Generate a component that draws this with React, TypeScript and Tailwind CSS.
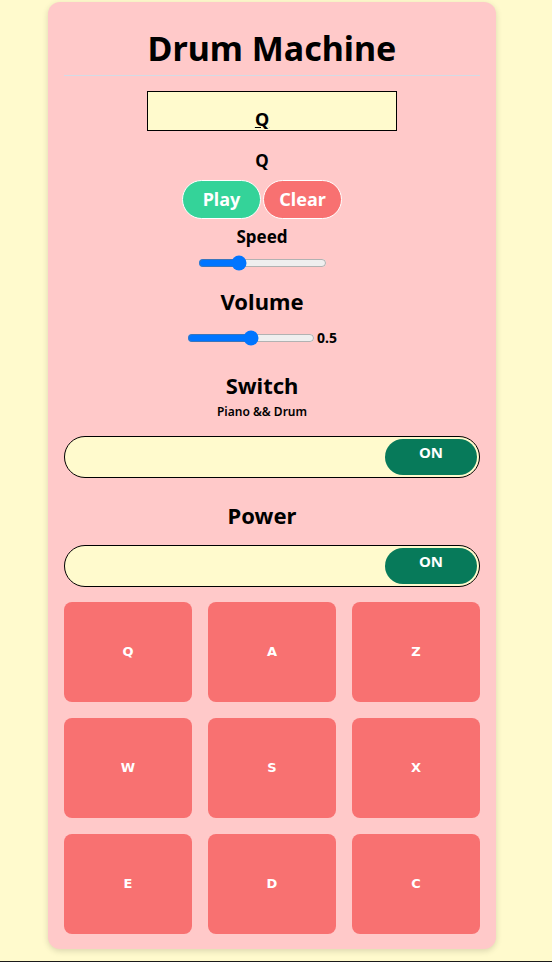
import React, { useState } from 'react';

const PADS = ['Q', 'A', 'Z', 'W', 'S', 'X', 'E', 'D', 'C'];

function Toggle({ on, onClick }: { on: boolean; onClick: () => void }) {
  return (
    <button
      onClick={onClick}
      className={`flex h-[42px] w-full items-stretch rounded-full border border-black bg-[#fffacd] p-[2px] ${on ? 'justify-end' : 'justify-start'}`}
    >
      <span className="flex w-[92px] items-start justify-center rounded-full bg-[#077a5a] pt-[3px] text-[15px] font-bold leading-[20px] text-white">
        {on ? 'ON' : 'OFF'}
      </span>
    </button>
  );
}

export default function App() {
  const [display, setDisplay] = useState('Q');
  const [speed, setSpeed] = useState(0.3);
  const [volume, setVolume] = useState(0.5);
  const [piano, setPiano] = useState(true);
  const [power, setPower] = useState(true);

  return (
    <div
      className="h-[962px] border-b border-[#1a1a1a] bg-[#fffacd] pt-[2px]"
      style={{ fontFamily: '"Noto Sans", "Open Sans", sans-serif' }}
    >
      <div className="ml-[48px] flex w-[448px] flex-col items-center rounded-xl bg-[#ffc9c9] px-4 pb-[15px] shadow-[0_2px_6px_rgba(0,0,0,0.15)]">
        <h1 className="mt-[22px] text-[34px] font-bold leading-[48px] text-black">Drum Machine</h1>
        <div className="mt-[3px] h-px w-full bg-[#d3dbe6]" />

        {/* Pantalla */}
        <div className="mt-[15px] flex h-[40px] w-[250px] items-start justify-center border border-black bg-[#fffacd] pr-[20px] pt-[15px]">
          <span className="text-[18px] font-bold leading-[24px] underline">{display}</span>
        </div>

        {/* Controles: van algo desplazados a la izquierda */}
        <div className="flex w-full flex-col items-center pr-[20px]">
          <p className="mt-[18px] text-[17px] font-bold leading-[24px]">{display}</p>

          <div className="mt-[7px] flex gap-[2px]">
            <button
              onClick={() => setDisplay('Q')}
              className="h-[39px] w-[79px] rounded-full border border-white bg-[#34d399] text-[18px] font-bold text-white"
            >
              Play
            </button>
            <button
              onClick={() => setDisplay('')}
              className="h-[39px] w-[79px] rounded-full border border-white bg-[#f87171] text-[18px] font-bold text-white"
            >
              Clear
            </button>
          </div>

          <p className="mt-[4px] text-[17px] font-bold leading-[28px]">Speed</p>
          <input
            type="range"
            min={0}
            max={1}
            step={0.01}
            value={speed}
            onChange={(e) => setSpeed(Number(e.target.value))}
            className="mt-[4px] h-[16px] w-[129px]"
          />

          <p className="mt-[15px] text-[22px] font-bold leading-[30px]">Volume</p>
          <div className="mt-[12px] flex items-center gap-[2px]">
            <input
              type="range"
              min={0}
              max={1}
              step={0.01}
              value={volume}
              onChange={(e) => setVolume(Number(e.target.value))}
              className="h-[16px] w-[128px]"
            />
            <span className="text-[14px] font-bold leading-[20px]">{volume}</span>
          </div>

          <p className="mt-[22px] text-[22px] font-bold leading-[30px]">Switch</p>
          <p className="mt-[5px] text-[12px] font-semibold leading-[14px]">Piano &amp;&amp; Drum</p>
        </div>

        <div className="mt-[17px] w-full">
          <Toggle on={piano} onClick={() => setPiano(!piano)} />
        </div>

        <p className="mt-[22px] pr-[20px] text-[22px] font-bold leading-[30px]">Power</p>
        <div className="mt-[15px] w-full">
          <Toggle on={power} onClick={() => setPower(!power)} />
        </div>

        <div className="mt-[15px] grid w-full grid-cols-3 gap-4">
          {PADS.map((k) => (
            <button
              key={k}
              onClick={() => setDisplay(k)}
              className="flex h-[100px] items-center justify-center rounded-lg bg-[#f87171] text-[13px] font-bold text-white"
              style={{ fontFamily: '"DejaVu Sans", sans-serif' }}
            >
              {k}
            </button>
          ))}
        </div>
      </div>
    </div>
  );
}
